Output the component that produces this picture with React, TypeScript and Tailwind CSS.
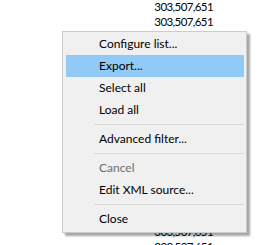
const rows = Array.from({ length: 17 }, () => "303,507,651");

type Entry = { label?: string; sep?: boolean; active?: boolean; disabled?: boolean };

const entries: Entry[] = [
  { label: "Configure list..." },
  { label: "Export...", active: true },
  { label: "Select all" },
  { label: "Load all" },
  { sep: true },
  { label: "Advanced filter..." },
  { sep: true },
  { label: "Cancel", disabled: true },
  { label: "Edit XML source..." },
  { sep: true },
  { label: "Close" },
];

export default function App() {
  return (
    <div className="relative w-[274px] h-[245px] overflow-hidden bg-white font-['Lato',sans-serif] text-[12px] text-black">
      <div className="flex flex-col items-end pr-[61px] -mt-[1px]">
        {rows.map((r, i) => (
          <div key={i} className="h-[15px] leading-[15px] text-[11.5px] tracking-[-0.6px]">{r}</div>
        ))}
      </div>

      <div className="absolute left-[62px] top-[31px] w-[185px] border border-[#cccccc] bg-[#f0f0f0] pt-[1px] pb-[2px] shadow-[3px_3px_2px_rgba(0,0,0,0.35)]">
        {entries.map((e, i) =>
          e.sep ? (
            <div key={i} className="h-[7px] flex items-center pl-[31px] pr-[2px]">
              <div className="h-px w-full bg-[#d7d7d7]" />
            </div>
          ) : (
            <div
              key={i}
              className={`h-[22px] ml-[3px] mr-[2px] pl-[33px] flex items-center ${e.active ? "bg-[#91c9f7]" : ""} ${e.disabled ? "text-[#6d6d6d]" : ""}`}
            >
              {e.label}
            </div>
          )
        )}
      </div>
    </div>
  );
}
